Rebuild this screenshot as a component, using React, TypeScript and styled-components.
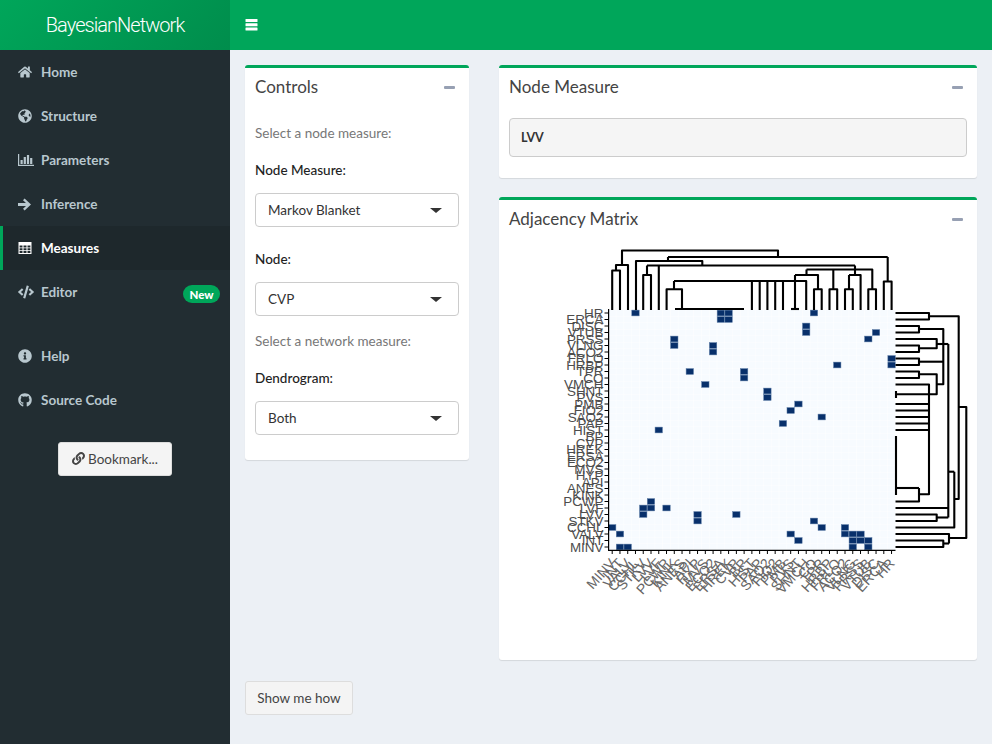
import React from "react";
import styled, { createGlobalStyle } from "styled-components";
import { FaHome, FaGlobeAmericas, FaCode, FaInfoCircle, FaGithub, FaLink } from "react-icons/fa";

const UI = `Lato, "Noto Sans", sans-serif`;

const Global = createGlobalStyle`
  html, body { margin: 0; padding: 0; height: 100%; overflow: hidden; }
  body { font-family: ${UI}; font-size: 13.5px; color: #333; background: #ecf0f5; }
  * { box-sizing: border-box; }
`;

const Page = styled.div`display: flex; width: 992px; height: 744px;`;
const Sidebar = styled.aside`width: 230px; flex: none; background: #222d32; display: flex; flex-direction: column;`;
const Logo = styled.div`
  height: 50px; display: flex; align-items: center; justify-content: center;
  background: linear-gradient(135deg, #00a65a 0%, #008d4c 100%);
  color: #fff; font: 300 20px Roboto, sans-serif; letter-spacing: -0.95px;
`;
const Menu = styled.nav`display: flex; flex-direction: column;`;
const MenuItem = styled.div<{ $active?: boolean }>`
  height: 44px; display: flex; align-items: center; padding: 0 10px 0 15px;
  border-left: 3px solid ${(p) => (p.$active ? "#00a65a" : "transparent")};
  background: ${(p) => (p.$active ? "#1e282c" : "transparent")};
  color: ${(p) => (p.$active ? "#fff" : "#b8c7ce")};
  font-weight: 700; font-size: 13.5px;
`;
const MenuIcon = styled.span`width: 23px; display: flex; align-items: center; font-size: 14px;`;
const Spacer = styled.div`height: 20px;`;
const Badge = styled.span`
  margin-left: auto; margin-top: 4px; height: 18px; width: 37px; border-radius: 9px;
  background: #00a65a; color: #fff; font-size: 11.5px; font-weight: 900;
  display: flex; align-items: center; justify-content: center;
`;
const BookmarkRow = styled.div`padding: 20px 0 0 58px;`;
const Button = styled.button<{ $w: number }>`
  width: ${(p) => p.$w}px; height: 34px; padding: 0 0 1px; display: flex; align-items: center; justify-content: center; gap: 3px;
  background: #f4f4f4; border: 1px solid #ddd; border-radius: 3px;
  color: #444; font: 400 13.5px ${UI};
`;
const Main = styled.main`flex: 1; display: flex; flex-direction: column; min-width: 0;`;
const Topbar = styled.header`height: 50px; background: #00a65a; color: #fff; display: flex; align-items: center; padding-left: 15px;`;
const Content = styled.div`padding: 15px 15px 0; display: flex; flex-direction: column; gap: 21px;`;
const Columns = styled.div`display: grid; grid-template-columns: 224px 478px; gap: 30px; align-items: start;`;
const Column = styled.div`display: flex; flex-direction: column; gap: 19px;`;
const Box = styled.section`
  background: #fff; border-top: 3px solid #00a65a; border-radius: 3px;
  box-shadow: 0 1px 1px rgba(0,0,0,.1);
`;
const BoxHeader = styled.div`height: 38px; padding: 0 14px 2px 10px; display: flex; align-items: center; justify-content: space-between;`;
const BoxTitle = styled.h3`margin: 0; font: 400 17px ${UI}; color: #444;`;
const Collapse = styled.span`width: 11px; height: 3px; border-radius: 1px; background: #97a0b3; margin-top: 2px;`;
const ControlsBody = styled.div`padding: 17px 10px 25px 10px;`;
const Line = styled.div<{ $top: number; $muted?: boolean }>`
  margin-top: ${(p) => p.$top}px; line-height: 20px; font-size: 13.5px;
  color: ${(p) => (p.$muted ? "#777" : "#222")};
  font-weight: ${(p) => (p.$muted ? 400 : 500)};
`;
const Select = styled.div`
  margin-top: 13px; height: 34px; border: 1px solid #ccc; border-radius: 4px; background: #fff;
  display: flex; align-items: center; justify-content: space-between; padding: 0 16px 0 12px;
  color: #333; font-size: 13.5px;
`;
const Caret = styled.span`width: 0; height: 0; border-left: 6px solid transparent; border-right: 6px solid transparent; border-top: 5px solid #333;`;
const OutputBody = styled.div`padding: 12px 10px 21px;`;
const Verbatim = styled.div`
  height: 39px; background: #f5f5f5; border: 1px solid #ccc; border-radius: 4px;
  padding: 0 11px; display: flex; align-items: center; font-size: 12.5px; font-weight: 700; color: #333;
`;
const PlotArea = styled.div`height: 422px; padding-top: 2px;`;
const PlotSvg = styled.svg`display: block; width: 478px; height: 420px;`;
const RowLabel = styled.text`font: 12px "Liberation Sans", Arial, sans-serif; fill: #4d4d4d;`;
const ColLabel = styled.text`font: 14px "Liberation Sans", Arial, sans-serif; fill: #666;`;

const BarsIcon = () => (
  <svg width="13" height="12" viewBox="0 0 13 12" fill="currentColor">
    <rect x="0.5" y="0" width="12" height="3" rx="0.5" /><rect x="0.5" y="4.3" width="12" height="3" rx="0.5" /><rect x="0.5" y="8.6" width="12" height="3" rx="0.5" />
  </svg>
);
const ChartIcon = () => (
  <svg width="16" height="12" viewBox="0 0 16 12" fill="currentColor">
    <rect x="0" y="0" width="1.2" height="12" /><rect x="0" y="10.8" width="16" height="1.2" />
    <rect x="2.5" y="6" width="2.2" height="4" /><rect x="5.7" y="3" width="2.2" height="7" /><rect x="8.9" y="1" width="2.2" height="9" /><rect x="12.1" y="4" width="2.2" height="6" />
  </svg>
);
const ArrowIcon = () => (
  <svg width="13" height="13" viewBox="0 0 13 13" fill="currentColor">
    <path d="M6.6 0.6 13 6.5 6.6 12.4 5 10.8 8 8H0V5H8L5 2.2Z" />
  </svg>
);
const TableIcon = () => (
  <svg width="14" height="12" viewBox="0 0 14 12" fill="currentColor" fillRule="evenodd">
    <path d="M0.5 0H13.5V12H0.5ZM1.6 3.5V5.5H4.5V3.5ZM5.5 3.5V5.5H8.5V3.5ZM9.5 3.5V5.5H12.4V3.5ZM1.6 6.3V8.2H4.5V6.3ZM5.5 6.3V8.2H8.5V6.3ZM9.5 6.3V8.2H12.4V6.3ZM1.6 9V10.9H4.5V9ZM5.5 9V10.9H8.5V9ZM9.5 9V10.9H12.4V9Z" />
  </svg>
);

const labels = ["HR","ERCA","DISC","VTUB","PRSS","VLNG","ACO2","FRLO","HRBP","TPR","CO","VMCH","SHNT","PVS","PMB","FIO2","SAO2","PAP","HIST","BP","CVP","HREK","ERSA","ECO2","MVS","HYP","API","ANES","KINK","PCWP","LVF","LVV","STKV","CCHL","VALV","INT","MINV"];
const cx = (i: number) => 612.2 + 7.76 * i;
const cy = (i: number) => 313 + 6.5 * i;
const dark: [number, number][] = [
  [3,0],[14,0],[15,0],[14,1],[15,1],[8,4],[8,5],[13,5],[13,6],[10,9],[17,9],[17,10],[12,11],[6,18],
  [26,0],[25,2],[25,3],[34,3],[33,4],[36,7],[36,8],[29,8],[20,12],[20,13],[24,14],[23,15],[27,16],[22,17],
  [0,33],[1,34],[1,36],[2,36],[5,29],[4,30],[5,30],[4,31],[7,30],[11,31],[11,32],[16,31],
  [26,32],[27,33],[23,34],[24,35],[30,33],[30,34],[31,34],[31,35],[31,36],[32,34],[32,35],[33,35],[33,36],
];
const idx = Array.from({ length: 37 }, (_, i) => i);
const top = 310;
const topPaths = [
  `M612.2 ${top}V270.5H620V${top}`, `M616 270.5V265H628V${top}`, `M622 265V250.5H778V257`,
  `M668 257H887.7`, `M668 257V261H636V${top}`, `M636 261H702.3V265.5`, `M647 265.5H855`,
  `M647 265.5V275`, `M643.2 ${top}V275H651V${top}`, `M658.8 265.5V${top}`,
  `M855 265.5V269.5`, `M806.5 269.5H872.3V289.3`, `M868.3 ${top}V289.3H876V${top}`,
  `M833.3 269.5V289.3`, `M829.5 ${top}V289.3H837.2V${top}`, `M806.5 269.5V275`,
  `M795 275H818V289.3`, `M814 ${top}V289.3H821.7V${top}`, `M849 275H860.6V${top}`, `M849 275V289.3`,
  `M845 ${top}V289.3H852.8V${top}`, `M855 269.5V275`, `M795 275V309`, `M791 309H799`,
  `M674 281H806.2V${top}`, `M674 281V289.3`, `M666.6 ${top}V289.3H682V309`, `M675 309H744`, `M682 309V${top}`,
  `M751.9 281V${top}`, `M759.7 281V${top}`, `M767.4 281V${top}`, `M775.2 281V${top}`, `M783 281V${top}`,
  `M887.7 257V281.5`, `M883.8 ${top}V281.5H891.6V${top}`,
];
const L = 895.5;
const rightPaths = [
  `M${L} 313H929V319.5H${L}`, `M929 316.3H958.7V499H954.3`, `M954.3 471.7V527.5H${L}`, `M954.3 471.7H948.3`,
  `M948.3 344V517.5`, `M958.7 407H966.3V538H949`, `M${L} 534H949V543.5`, `M${L} 540.5H943.3V547H${L}`, `M943.3 543.5H949`,
  `M${L} 508H948.3`, `M${L} 514.5H936.7V521H${L}`, `M936.7 517.5H948.3`,
  `M${L} 326H919V332.5H${L}`, `M919 329H943.3V384.3H936.7`, `M${L} 339H936.7V348.3H919`,
  `M${L} 345.5H919V352H${L}`, `M936.7 344H948.3`, `M${L} 358.5H919V365H${L}`, `M919 361.7H943.3`,
  `M${L} 371.5H919V378H${L}`, `M919 374.3H936.7V394.3H896`, `M896 391V398`,
  `M${L} 384.5H929V494.3H919`, `M919 488H${L}`, `M919 488V501.5H${L}`, `M896 436V495`,
  ...[404, 410.5, 417, 423.5, 430].map((y) => `M${L} ${y}H929`),
];

const Heatmap = () => (
  <PlotSvg viewBox="499 240 478 420">
    <rect x={608.3} y={309.7} width={287.2} height={240.6} fill="#fdfeff" />
    {idx.map((r) => idx.map((c) => (
      <rect key={`${r}-${c}`} x={cx(c) - 3.6} y={cy(r) - 2.95} width={7.2} height={5.9} fill="#f7fbff" />
    )))}
    {dark.map(([c, r]) => (
      <rect key={`d${c}-${r}`} x={cx(c) - 3.7} y={cy(r) - 2.9} width={7.4} height={5.8} fill="#08306b" stroke="#5f7fa8" strokeWidth={0.5} />
    ))}
    <path d="M608.6 309V550.4H895.5" fill="none" stroke="#000" strokeWidth={1.2} />
    {idx.map((i) => <path key={`ly${i}`} d={`M604.5 ${cy(i)}H608`} stroke="#000" strokeWidth={1} />)}
    {idx.map((i) => <path key={`lx${i}`} d={`M${cx(i)} 550.5V554`} stroke="#000" strokeWidth={1} />)}
    <g fill="none" stroke="#000" strokeWidth={2.1} strokeLinejoin="round">
      {topPaths.map((d) => <path key={d} d={d} />)}
      {rightPaths.map((d) => <path key={d} d={d} />)}
    </g>
    {labels.map((t, i) => (
      <RowLabel key={`y${t}`} textAnchor="end" transform={`translate(603.5 ${cy(i) + 4.8}) scale(1.12 1)`}>{t}</RowLabel>
    ))}
    {idx.map((i) => (
      <ColLabel key={`x${i}`} textAnchor="end" transform={`translate(${cx(i) + 4} 564) rotate(-48)`}>{labels[36 - i]}</ColLabel>
    ))}
  </PlotSvg>
);

const items: { icon: React.ReactNode; label: string; active?: boolean; badge?: string }[] = [
  { icon: <FaHome />, label: "Home" },
  { icon: <FaGlobeAmericas />, label: "Structure" },
  { icon: <ChartIcon />, label: "Parameters" },
  { icon: <ArrowIcon />, label: "Inference" },
  { icon: <TableIcon />, label: "Measures", active: true },
  { icon: <FaCode size={16} />, label: "Editor", badge: "New" },
];

export default function App() {
  return (
    <Page>
      <Global />
      <Sidebar>
        <Logo>BayesianNetwork</Logo>
        <Menu>
          {items.map((it) => (
            <MenuItem key={it.label} $active={it.active}>
              <MenuIcon>{it.icon}</MenuIcon>{it.label}
              {it.badge && <Badge>{it.badge}</Badge>}
            </MenuItem>
          ))}
          <Spacer />
          <MenuItem><MenuIcon><FaInfoCircle /></MenuIcon>Help</MenuItem>
          <MenuItem><MenuIcon><FaGithub /></MenuIcon>Source Code</MenuItem>
        </Menu>
        <BookmarkRow>
          <Button $w={114}><FaLink size={13} />Bookmark...</Button>
        </BookmarkRow>
      </Sidebar>
      <Main>
        <Topbar><BarsIcon /></Topbar>
        <Content>
          <Columns>
            <Box>
              <BoxHeader><BoxTitle>Controls</BoxTitle><Collapse /></BoxHeader>
              <ControlsBody>
                <Line $top={0} $muted>Select a node measure:</Line>
                <Line $top={17}>Node Measure:</Line>
                <Select>Markov Blanket<Caret /></Select>
                <Line $top={22}>Node:</Line>
                <Select>CVP<Caret /></Select>
                <Line $top={15} $muted>Select a network measure:</Line>
                <Line $top={17}>Dendrogram:</Line>
                <Select>Both<Caret /></Select>
              </ControlsBody>
            </Box>
            <Column>
              <Box>
                <BoxHeader><BoxTitle>Node Measure</BoxTitle><Collapse /></BoxHeader>
                <OutputBody><Verbatim>LVV</Verbatim></OutputBody>
              </Box>
              <Box>
                <BoxHeader><BoxTitle>Adjacency Matrix</BoxTitle><Collapse /></BoxHeader>
                <PlotArea><Heatmap /></PlotArea>
              </Box>
            </Column>
          </Columns>
          <Button $w={108}>Show me how</Button>
        </Content>
      </Main>
    </Page>
  );
}
